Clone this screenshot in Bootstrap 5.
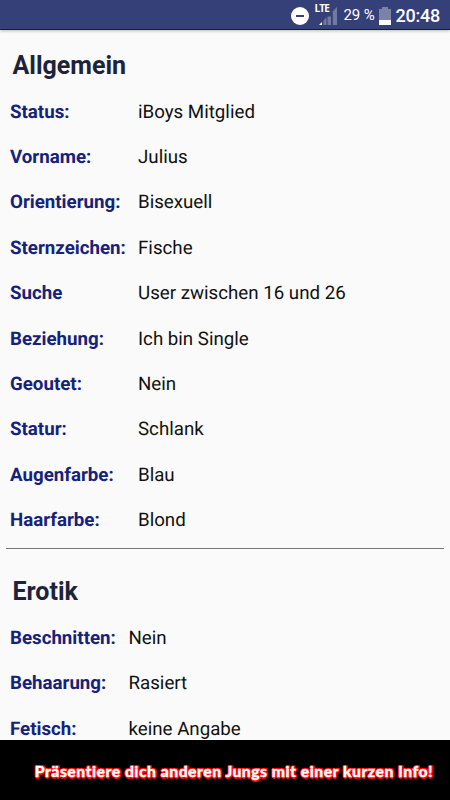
<!DOCTYPE html>
<html lang="de">
<head>
<meta charset="utf-8">
<meta name="viewport" content="width=device-width, initial-scale=1">
<title>Profil</title>
<link href="https://cdn.jsdelivr.net/npm/bootstrap@5.3.0/dist/css/bootstrap.min.css" rel="stylesheet">
<style>
body{font-family:Roboto,"Liberation Sans",sans-serif;background:#fafafa;color:#111;height:800px}
.status-bar{height:30px;background:#354079;border-bottom:1px solid #101a55;box-shadow:0 1px 3px rgba(0,0,0,.25);font-size:15px;padding-right:10px;padding-top:2px}
.status-bar svg{display:block}
.lte{font-family:"Open Sans",sans-serif;font-size:10px;left:-4px;top:-5px;line-height:12px;letter-spacing:-.9px;font-weight:700}
.signal{margin-left:10px;margin-right:7px}
.clock{font-size:18px;font-weight:500;line-height:24px;margin-left:5px;letter-spacing:-.25px}
.percent{width:31px;letter-spacing:-.15px}
.section-title{font-size:25px;font-weight:700;color:#1d2439;height:59px;padding:21px 0 0 12.5px;line-height:30px}
.erotik-title{height:66px;padding-top:28px}
.entry{height:45.4px;font-size:18.72px;padding-left:10px;text-rendering:geometricPrecision}
.entry dt{font-weight:700;color:#16227a;width:128px}
.erotik dt{width:118.5px}
.divider{height:1.5px;background:#77757a;margin:5px 6px 0}
.banner{height:60px;background:#000;padding-top:3px;padding-right:17px}
.slogan{font-family:Lato,sans-serif;font-weight:900;font-size:15.7px;letter-spacing:.51px;font-variant-ligatures:none;color:#fff;-webkit-text-stroke:.35px #fff;
text-shadow:1.5px 0 0 red,-1.5px 0 0 red,0 1.5px 0 red,0 -1.5px 0 red,1px 1px 0 red,-1px 1px 0 red,1px -1px 0 red,-1px -1px 0 red}
</style>
<script src="https://cdn.jsdelivr.net/npm/bootstrap@5.3.0/dist/js/bootstrap.bundle.min.js"></script>
</head>
<body class="d-flex flex-column overflow-hidden">
<header class="status-bar d-flex align-items-center justify-content-end text-white flex-shrink-0">
  <svg width="18" height="18" viewBox="0 0 18 18"><circle cx="9" cy="9" r="9" fill="#fff"/><path d="M5 9h8" stroke="#354079" stroke-width="2"/></svg>
  <div class="signal position-relative">
    <svg width="18" height="18" viewBox="0 0 18 18"><path d="M4.500 13.500l3-3v7.500h-3zM8.500 9.500h3.500v8.500h-3.500zM13 5l5-5v18h-5z" fill="#727aa2"/><path d="M13 5h.8v13H13z" fill="#354079"/><path d="M0 18l3-3v3z" fill="#fff"/></svg>
    <span class="position-absolute lte">LTE</span>
  </div>
  <span class="percent text-nowrap">29&nbsp;%</span>
  <svg class="ms-1" width="12" height="18" viewBox="0 0 12 18"><path d="M3 0h6v2h3v16H0V2h3z" fill="#7b82a8"/><path d="M0 13h12v5H0z" fill="#fff"/></svg>
  <span class="clock">20:48</span>
</header>
<main class="flex-grow-1 overflow-hidden">
  <section>
    <h1 class="section-title m-0">Allgemein</h1>
    <dl class="m-0">
      <div class="entry d-flex align-items-center"><dt>Status:</dt><dd class="m-0">iBoys Mitglied</dd></div>
      <div class="entry d-flex align-items-center"><dt>Vorname:</dt><dd class="m-0">Julius</dd></div>
      <div class="entry d-flex align-items-center"><dt>Orientierung:</dt><dd class="m-0">Bisexuell</dd></div>
      <div class="entry d-flex align-items-center"><dt>Sternzeichen:</dt><dd class="m-0">Fische</dd></div>
      <div class="entry d-flex align-items-center"><dt>Suche</dt><dd class="m-0">User zwischen 16 und 26</dd></div>
      <div class="entry d-flex align-items-center"><dt>Beziehung:</dt><dd class="m-0">Ich bin Single</dd></div>
      <div class="entry d-flex align-items-center"><dt>Geoutet:</dt><dd class="m-0">Nein</dd></div>
      <div class="entry d-flex align-items-center"><dt>Statur:</dt><dd class="m-0">Schlank</dd></div>
      <div class="entry d-flex align-items-center"><dt>Augenfarbe:</dt><dd class="m-0">Blau</dd></div>
      <div class="entry d-flex align-items-center"><dt>Haarfarbe:</dt><dd class="m-0">Blond</dd></div>
    </dl>
  </section>
  <div class="divider"></div>
  <section class="erotik">
    <h1 class="section-title erotik-title m-0">Erotik</h1>
    <dl class="m-0">
      <div class="entry d-flex align-items-center"><dt>Beschnitten:</dt><dd class="m-0">Nein</dd></div>
      <div class="entry d-flex align-items-center"><dt>Behaarung:</dt><dd class="m-0">Rasiert</dd></div>
      <div class="entry d-flex align-items-center"><dt>Fetisch:</dt><dd class="m-0">keine Angabe</dd></div>
    </dl>
  </section>
</main>
<footer class="banner d-flex align-items-center justify-content-end flex-shrink-0">
  <span class="slogan text-nowrap">Präsentiere dich anderen Jungs mit einer kurzen Info!</span>
</footer>
</body>
</html>
